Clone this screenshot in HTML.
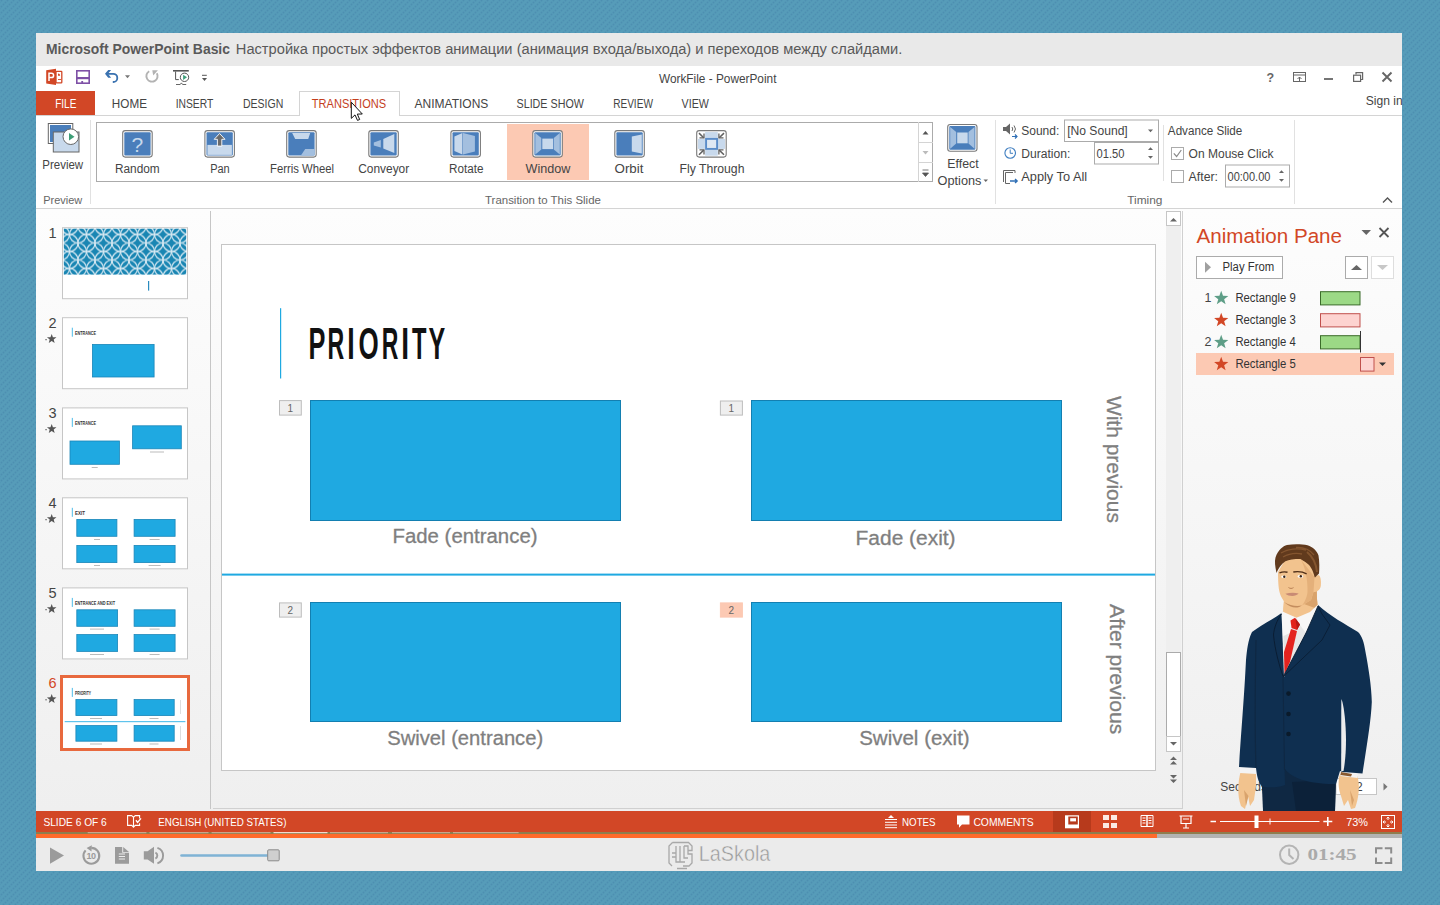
<!DOCTYPE html>
<html><head><meta charset="utf-8"><title>PowerPoint</title>
<style>
*{margin:0;padding:0;box-sizing:border-box;}
html,body{width:1440px;height:905px;overflow:hidden;}
body{background:#569cb9;}
#root{position:relative;width:1440px;height:905px;font-family:"Liberation Sans", sans-serif;}
.a{position:absolute;}
.t{position:absolute;white-space:nowrap;line-height:1;}

</style></head>
<body>
<div id="root">
<svg class="a" style="left:0;top:0" width="1440" height="905"><defs><pattern id="dots" x="0" y="0" width="6" height="6" patternUnits="userSpaceOnUse"><rect width="6" height="6" fill="#569cb9"/><circle cx="1.5" cy="0.5" r="0.95" fill="#4d8fb1"/><circle cx="5.5" cy="2.5" r="0.95" fill="#4d8fb1"/><circle cx="3.5" cy="4.5" r="0.95" fill="#4d8fb1"/><circle cx="1.5" cy="6.5" r="0.95" fill="#4d8fb1"/><circle cx="-0.5" cy="2.5" r="0.95" fill="#4d8fb1"/></pattern></defs><rect width="1440" height="905" fill="url(#dots)"/></svg>
<!-- window -->
<div class="a" style="left:36px;top:33px;width:1366px;height:838px;background:#fff;"></div>
<!-- course title bar -->
<div class="a" style="left:36px;top:33px;width:1366px;height:33px;background:#e9e9e9;"></div>
<!-- FILE tab -->
<div class="a" style="left:36px;top:91px;width:59px;height:25px;background:#d24726;"></div>
<!-- tab row bottom line -->
<div class="a" style="left:36px;top:115px;width:1366px;height:1px;background:#d4d4d4;"></div>
<!-- TRANSITIONS tab border -->
<div class="a" style="left:299px;top:91px;width:101px;height:25px;border:1px solid #d4d4d4;border-bottom:none;background:#fff;"></div>
<!-- ribbon bottom line -->
<div class="a" style="left:36px;top:208px;width:1366px;height:1px;background:#d4d4d4;"></div>
<!-- ribbon separators -->
<div class="a" style="left:90px;top:120px;width:1px;height:84px;background:#e1e1e1;"></div>
<div class="a" style="left:995px;top:120px;width:1px;height:84px;background:#e1e1e1;"></div>
<div class="a" style="left:1294px;top:120px;width:1px;height:84px;background:#e1e1e1;"></div>
<div class="a" style="left:1163px;top:125px;width:1px;height:56px;background:#e1e1e1;"></div>
<!-- gallery -->
<div class="a" style="left:96px;top:122px;width:837px;height:60px;border:1px solid #ababab;background:#fff;"></div>
<div class="a" style="left:507px;top:124px;width:82px;height:56px;background:#fcc9b3;"></div>
<!-- gallery scroll buttons -->
<div class="a" style="left:918px;top:122px;width:15px;height:60px;border-left:1px solid #d4d4d4;"></div>
<div class="a" style="left:918px;top:142px;width:15px;height:1px;background:#d4d4d4;"></div>
<div class="a" style="left:918px;top:162px;width:15px;height:1px;background:#d4d4d4;"></div>

<!-- main area panels -->
<div class="a" style="left:36px;top:209px;width:1366px;height:602px;background:linear-gradient(#fdfdfd,#efefef);"></div>
<div class="a" style="left:210px;top:211px;width:1px;height:598px;background:#c6c6c6;"></div>
<div class="a" style="left:213px;top:808px;width:970px;height:1px;background:#d0d0d0;"></div>
<div class="a" style="left:1182px;top:211px;width:1px;height:597px;background:#d0d0d0;"></div>
<!-- slide -->
<div class="a" style="left:221px;top:244px;width:935px;height:527px;background:#fff;border:1px solid #c6c6c6;"></div>
<!-- scrollbar -->
<div class="a" style="left:1166px;top:211px;width:15px;height:541px;background:#efefef;"></div>
<div class="a" style="left:1166px;top:211px;width:15px;height:15px;background:#fff;border:1px solid #c6c6c6;"></div>
<div class="a" style="left:1166px;top:652px;width:15px;height:85px;background:#fff;border:1px solid #ababab;"></div>
<div class="a" style="left:1166px;top:736px;width:15px;height:16px;background:#fff;border:1px solid #c6c6c6;"></div>

<!-- status bar -->
<div class="a" style="left:36px;top:811px;width:1366px;height:21px;background:#d24726;"></div>
<div class="a" style="left:36px;top:832px;width:1366px;height:1.5px;background:#8f7d4e;"></div>
<div class="a" style="left:36px;top:833.5px;width:1366px;height:4.5px;background:#b3b3b3;"></div>
<div class="a" style="left:36px;top:833.5px;width:1121px;height:4.5px;background:#ff6a2b;"></div>
<div class="a" style="left:1053px;top:811px;width:38px;height:21px;background:#b73a1c;"></div>
<!-- player bar -->
<div class="a" style="left:36px;top:838px;width:1366px;height:33px;background:#ebebeb;"></div>

<svg class="a" style="left:0;top:0" width="1440" height="905" viewBox="0 0 1440 905"><g><rect x="56" y="71.3" width="5.8" height="11.6" rx="0.6" fill="#fff" stroke="#d24726" stroke-width="1.3"/><path d="M58 79.5 h3 " stroke="#d24726" stroke-width="0.9"/><path d="M58 73.5 a2.2 2.2 0 0 1 2.2 2.2 h-2.2 z" fill="#d24726"/><path d="M46.2 70.2 L56 68.8 L56 85 L46.2 83.5 Z" fill="#d24726"/><path d="M49 81 V73.2 h2.4 a2.1 2.1 0 0 1 0 4.4 h-2.4" fill="none" stroke="#fff" stroke-width="1.5"/><rect x="76.8" y="70.8" width="12.4" height="12.4" fill="#fff" stroke="#7e50a6" stroke-width="1.6"/><rect x="77" y="77" width="12" height="2.2" fill="#7e50a6"/><rect x="81.3" y="81" width="1.8" height="2.5" fill="#7e50a6"/><path d="M106.5 73.8 H113.2 a4.1 4.1 0 0 1 0 8.2 H112.8" fill="none" stroke="#3a72b0" stroke-width="1.8"/><path d="M108.2 69.9 L111.1 69.9 L108 73.8 L111.1 77.7 L108.2 77.7 L105 73.8 Z" fill="#3a72b0"/><path d="M125 75.2 h5 l-2.5 3 z" fill="#777"/><path d="M149.2 71.2 A5.6 5.6 0 1 0 156.8 73.2" fill="none" stroke="#b3b3b3" stroke-width="1.9"/><path d="M152.3 70.2 H157.9 L153.2 75.6 Z" fill="#b3b3b3"/><rect x="173" y="70" width="15.8" height="1.6" fill="#555"/><path d="M175.6 71.5 V79.6 H178.8" fill="none" stroke="#555" stroke-width="1"/><circle cx="184.5" cy="77.3" r="4.2" fill="#fff" stroke="#555" stroke-width="1"/><path d="M183.1 74.8 L187 77.3 L183.1 79.9 Z" fill="#3e9e7a"/><path d="M176 84.5 h4.2 l1.2 -1.6 l1.2 1.6 h3.6" fill="none" stroke="#555" stroke-width="0.9"/><path d="M202 75.3 h4.8" stroke="#555" stroke-width="1"/><path d="M202 78 h5 l-2.5 3 z" fill="#555"/></g>
<g fill="none" stroke="#666"><rect x="1293.5" y="72.5" width="12" height="9" stroke-width="1"/><path d="M1293.5 75 h12" stroke-width="1"/><path d="M1299.5 81.5 V77 M1297.5 79 L1299.5 77 L1301.5 79" stroke-width="1"/><path d="M1324 79 h9" stroke-width="1.8"/><rect x="1353.6" y="75.2" width="7" height="6.2" stroke-width="1.2"/><path d="M1356 74.5 V72.6 H1362.6 V79.5 H1360.6" stroke-width="1.2"/><path d="M1382.5 72.5 L1391.5 81.5 M1391.5 72.5 L1382.5 81.5" stroke-width="1.9"/></g><text x="1266.5" y="81.6" font-family="Liberation Sans" font-weight="700" font-size="12.5" fill="#666">?</text>
<g><rect x="48.3" y="123.5" width="24.5" height="20" fill="#fff" stroke="#666" stroke-width="1"/><rect x="50" y="125" width="21" height="7" fill="#4a7ebb"/><rect x="50" y="125" width="3" height="17" fill="#4a7ebb"/><rect x="53.3" y="132" width="25.7" height="20" fill="#c8d9ec" stroke="#666" stroke-width="1"/><circle cx="70.8" cy="136.7" r="7.8" fill="#fff" stroke="#666" stroke-width="1"/><path d="M69 133 L74.5 136.7 L69 140.4 Z" fill="#3e9e76"/></g>
<g><rect x="122.7" y="130.6" width="29.5" height="26.5" rx="2.5" fill="#fff" stroke="#7a7a7a" stroke-width="1.1"/><rect x="124.3" y="132.2" width="26.3" height="23.3" rx="1" fill="#4a7ebb"/><rect x="204.9" y="130.6" width="29.5" height="26.5" rx="2.5" fill="#fff" stroke="#7a7a7a" stroke-width="1.1"/><rect x="206.5" y="132.2" width="26.3" height="23.3" rx="1" fill="#4a7ebb"/><rect x="286.7" y="130.6" width="29.5" height="26.5" rx="2.5" fill="#fff" stroke="#7a7a7a" stroke-width="1.1"/><rect x="288.3" y="132.2" width="26.3" height="23.3" rx="1" fill="#4a7ebb"/><rect x="368.8" y="130.6" width="29.5" height="26.5" rx="2.5" fill="#fff" stroke="#7a7a7a" stroke-width="1.1"/><rect x="370.40000000000003" y="132.2" width="26.3" height="23.3" rx="1" fill="#4a7ebb"/><rect x="450.9" y="130.6" width="29.5" height="26.5" rx="2.5" fill="#fff" stroke="#7a7a7a" stroke-width="1.1"/><rect x="452.5" y="132.2" width="26.3" height="23.3" rx="1" fill="#4a7ebb"/><rect x="532.8" y="130.6" width="29.5" height="26.5" rx="2.5" fill="#fff" stroke="#7a7a7a" stroke-width="1.1"/><rect x="534.4" y="132.2" width="26.3" height="23.3" rx="1" fill="#4a7ebb"/><rect x="614.8" y="130.6" width="29.5" height="26.5" rx="2.5" fill="#fff" stroke="#7a7a7a" stroke-width="1.1"/><rect x="616.4" y="132.2" width="26.3" height="23.3" rx="1" fill="#4a7ebb"/><text x="137.4" y="151.6" text-anchor="middle" font-family="Liberation Sans" font-weight="400" font-size="21" fill="#c8d9ec">?</text><rect x="207.4" y="144.9" width="24.5" height="10" fill="#c8d9ec"/><path d="M219.6 133.5 L225.0 139.29999999999998 L221.8 139.29999999999998 L221.8 146.1 L217.4 146.1 L217.4 139.29999999999998 L214.20000000000002 139.29999999999998 Z" fill="#6b6b6b" stroke="#fff" stroke-width="0.9"/><path d="M292.2 133.1 H310.2 L308.2 139.1 H295.2 Z" fill="#c8d9ec"/><path d="M301.2 155.1 L305.2 149.1 H314.7 V155.6 Z" fill="#a3bfdf"/><path d="M383.3 139.1 L394.3 134.1 V153.1 L383.3 148.6 Z" fill="#c8d9ec"/><path d="M373.8 142.6 L380.8 140.1 V147.6 L373.8 145.6 Z" fill="#a3bfdf"/><path d="M454.4 136.6 L462.4 133.1 V154.6 L454.4 151.1 Z" fill="#c8d9ec"/><path d="M463.0 133.1 L474.9 136.1 V151.6 L463.0 154.6 Z" fill="#a3bfdf"/><path d="M535.3 133.1 L541.3 138.1 V149.6 L535.3 154.6 Z" fill="#a3bfdf"/><path d="M559.8 133.1 L553.8 138.1 V149.6 L559.8 154.6 Z" fill="#a3bfdf"/><rect x="542.3" y="138.6" width="10.8" height="10.5" fill="#c8d9ec"/><path d="M631.8 136.6 L641.8 134.4 V153.6 L631.8 151.6 Z" fill="#c8d9ec"/><rect x="696.7" y="130.6" width="29.5" height="26.5" rx="2.5" fill="#fff" stroke="#7a7a7a" stroke-width="1.1"/><rect x="705.1" y="132.1" width="12.7" height="23.6" fill="#c8d9ec"/><rect x="698.0" y="138.9" width="27" height="10" fill="#c8d9ec"/><rect x="706.1" y="138.9" width="11" height="10" fill="#dfe8f3" stroke="#5b8cc8" stroke-width="1.9"/><path d="M699.0 133.1 L703.7 137.79999999999998 M724.0 133.1 L719.2 137.79999999999998 M699.0 154.79999999999998 L703.7 150.1 M724.0 154.79999999999998 L719.2 150.1" stroke="#616161" stroke-width="1.5"/><path d="M704.0 133.4 V137.9 H699.5 M718.9000000000001 133.4 V137.9 H723.5 M704.0 154.4 V149.9 H699.5 M718.9000000000001 154.4 V149.9 H723.5" fill="none" stroke="#616161" stroke-width="1.3"/></g>
<g><rect x="947.7" y="124.5" width="29.3" height="26.8" rx="2.5" fill="#fff" stroke="#7a7a7a" stroke-width="1.1"/><rect x="949.3000000000001" y="126.1" width="26.1" height="23.6" rx="1" fill="#4a7ebb"/><path d="M950.2 127 L956.2 132 V143.5 L950.2 148.8 Z" fill="#a3bfdf"/><path d="M974.5 127 L968.5 132 V143.5 L974.5 148.8 Z" fill="#a3bfdf"/><rect x="957.2" y="132.5" width="10.5" height="10.8" fill="#c8d9ec"/><path d="M983.5 179.5 h4.5 l-2.25 2.6 z" fill="#666"/></g>
<path d="M922.5 134.5 h6 l-3 -3.5 z" fill="#555"/><path d="M922.5 151 h6 l-3 3.5 z" fill="#bbb"/><path d="M922.5 170 h6 M922.5 173 h6 l-3 3.5 z" fill="#555" stroke="#555" stroke-width="0.8"/>
<g><path d="M1003 127 h3 l4 -3.5 v11 l-4 -3.5 h-3 z" fill="#666"/><path d="M1012 127 q1.5 2 0 4 M1014 125.5 q3 3.5 0 7" fill="none" stroke="#666" stroke-width="1"/><path d="M1012 136.5 h5 M1015 134.5 l2 2 l-2 2" fill="none" stroke="#2f6fb5" stroke-width="1.2"/><rect x="1064.5" y="120" width="94" height="21.5" fill="#fff" stroke="#ababab" stroke-width="1"/><path d="M1148 129.5 h5 l-2.5 2.8 z" fill="#666"/><circle cx="1010.2" cy="153" r="5.3" fill="none" stroke="#3f7ec0" stroke-width="1.1"/><path d="M1010.2 149.5 V153.3 H1013" fill="none" stroke="#3f7ec0" stroke-width="1"/><rect x="1094.5" y="142.5" width="64" height="21.5" fill="#fff" stroke="#ababab" stroke-width="1"/><path d="M1148 150 h5 l-2.5 -2.8 z M1148 156 h5 l-2.5 2.8 z" fill="#666"/><path d="M1003.5 182 V170.5 H1015 V173" fill="none" stroke="#666" stroke-width="1"/><path d="M1005.5 183.5 V172.5 H1013 M1005.5 183.5 H1010" fill="none" stroke="#666" stroke-width="1"/><path d="M1010 181 h7 M1015 179 l2.2 2 l-2.2 2" fill="none" stroke="#2f6fb5" stroke-width="1.3"/><rect x="1171.5" y="147.5" width="12" height="12" fill="#fff" stroke="#ababab" stroke-width="1"/><path d="M1173.8 153.3 L1176.6 156.5 L1181.3 150" fill="none" stroke="#8a8a8a" stroke-width="1.2"/><rect x="1171.5" y="170.5" width="12" height="12" fill="#fff" stroke="#ababab" stroke-width="1"/><rect x="1225.5" y="165" width="64" height="22" fill="#fff" stroke="#ababab" stroke-width="1"/><path d="M1279 173 h5 l-2.5 -2.8 z M1279 179 h5 l-2.5 2.8 z" fill="#666"/><path d="M1383 202.5 L1387.5 198 L1392 202.5" fill="none" stroke="#555" stroke-width="1.4"/></g>
<g><defs><pattern id="rings" x="61" y="217.5" width="17" height="17" patternUnits="userSpaceOnUse"><rect width="17" height="17" fill="#1a86b3"/><g fill="none" stroke="#d5e8f2" stroke-width="1.2"><circle cx="0" cy="0" r="8.5"/><circle cx="17" cy="0" r="8.5"/><circle cx="0" cy="17" r="8.5"/><circle cx="17" cy="17" r="8.5"/><circle cx="8.5" cy="8.5" r="8.5"/><circle cx="8.5" cy="-8.5" r="8.5"/><circle cx="8.5" cy="25.5" r="8.5"/><circle cx="-8.5" cy="8.5" r="8.5"/><circle cx="25.5" cy="8.5" r="8.5"/></g></pattern></defs><rect x="62.5" y="227.7" width="125" height="71" fill="#fff" stroke="#c6c6c6" stroke-width="1"/><rect x="62.5" y="317.7" width="125" height="71" fill="#fff" stroke="#c6c6c6" stroke-width="1"/><rect x="62.5" y="407.9" width="125" height="71" fill="#fff" stroke="#c6c6c6" stroke-width="1"/><rect x="62.5" y="497.8" width="125" height="71" fill="#fff" stroke="#c6c6c6" stroke-width="1"/><rect x="62.5" y="587.9" width="125" height="71" fill="#fff" stroke="#c6c6c6" stroke-width="1"/><rect x="62.5" y="677.9" width="125" height="71" fill="#fff" stroke="#c6c6c6" stroke-width="1"/><rect x="63.8" y="228.7" width="122.4" height="45.9" fill="url(#rings)"/><rect x="148" y="281" width="1.2" height="9.6" fill="#2a8bbf"/><rect x="71.8" y="327.7" width="1.1" height="9" fill="#5fc3ec"/><text x="75.0" y="334.5" font-family="Liberation Sans" font-size="5.6" font-weight="700" fill="#333" textLength="21.0" lengthAdjust="spacingAndGlyphs">ENTRANCE</text><rect x="92.4" y="344.4" width="61.7" height="32.59999999999998" fill="#1fa9e1" stroke="#1b86b8" stroke-width="0.8"/><rect x="71.8" y="417.9" width="1.1" height="9" fill="#5fc3ec"/><text x="75.0" y="424.7" font-family="Liberation Sans" font-size="5.6" font-weight="700" fill="#333" textLength="21.0" lengthAdjust="spacingAndGlyphs">ENTRANCE</text><rect x="70.0" y="441.0" width="49.400000000000006" height="23.299999999999965" fill="#1fa9e1" stroke="#1b86b8" stroke-width="0.8"/><rect x="132.6" y="425.79999999999995" width="48.7" height="23.00000000000001" fill="#1fa9e1" stroke="#1b86b8" stroke-width="0.8"/><rect x="91.7" y="467.0" width="6" height="1" fill="#bbb"/><rect x="150.0" y="451.5" width="14" height="1" fill="#bbb"/><rect x="71.8" y="507.8" width="1.1" height="9" fill="#5fc3ec"/><text x="75.0" y="514.6" font-family="Liberation Sans" font-size="5.6" font-weight="700" fill="#333" textLength="10.0" lengthAdjust="spacingAndGlyphs">EXIT</text><rect x="76.80000000000001" y="519.4" width="40.099999999999994" height="16.900000000000045" fill="#1fa9e1" stroke="#1b86b8" stroke-width="0.8"/><rect x="134.1" y="519.4" width="41.000000000000014" height="16.900000000000045" fill="#1fa9e1" stroke="#1b86b8" stroke-width="0.8"/><rect x="76.80000000000001" y="545.4" width="40.099999999999994" height="17.2" fill="#1fa9e1" stroke="#1b86b8" stroke-width="0.8"/><rect x="134.1" y="545.4" width="41.000000000000014" height="17.2" fill="#1fa9e1" stroke="#1b86b8" stroke-width="0.8"/><rect x="94.0" y="539.0" width="6" height="1" fill="#bbb"/><rect x="149.6" y="539.0" width="10" height="1" fill="#bbb"/><rect x="94.0" y="565.0" width="6" height="1" fill="#bbb"/><rect x="148.6" y="565.0" width="12" height="1" fill="#bbb"/><rect x="71.8" y="597.9" width="1.1" height="9" fill="#5fc3ec"/><text x="75.0" y="604.7" font-family="Liberation Sans" font-size="5.6" font-weight="700" fill="#333" textLength="40.0" lengthAdjust="spacingAndGlyphs">ENTRANCE AND EXIT</text><rect x="76.80000000000001" y="609.8" width="40.8" height="16.500000000000068" fill="#1fa9e1" stroke="#1b86b8" stroke-width="0.8"/><rect x="134.1" y="609.8" width="41.000000000000014" height="16.500000000000068" fill="#1fa9e1" stroke="#1b86b8" stroke-width="0.8"/><rect x="76.80000000000001" y="634.6" width="40.8" height="16.79999999999991" fill="#1fa9e1" stroke="#1b86b8" stroke-width="0.8"/><rect x="134.1" y="634.6" width="41.000000000000014" height="16.79999999999991" fill="#1fa9e1" stroke="#1b86b8" stroke-width="0.8"/><rect x="90.0" y="628.6" width="14" height="1" fill="#bbb"/><rect x="149.6" y="628.6" width="10" height="1" fill="#bbb"/><rect x="90.0" y="654.0" width="14" height="1" fill="#bbb"/><rect x="149.6" y="654.0" width="10" height="1" fill="#bbb"/><rect x="61.5" y="676.5" width="127" height="73" fill="#fff" stroke="#e8693e" stroke-width="3"/><rect x="71.8" y="687.9" width="1.1" height="9" fill="#5fc3ec"/><text x="75.0" y="694.7" font-family="Liberation Sans" font-size="5.6" font-weight="700" fill="#333" textLength="16.0" lengthAdjust="spacingAndGlyphs">PRIORITY</text><rect x="75.9" y="699.6" width="41.0" height="15.999999999999954" fill="#1fa9e1" stroke="#1b86b8" stroke-width="0.8"/><rect x="134.1" y="699.6" width="40.10000000000001" height="15.999999999999954" fill="#1fa9e1" stroke="#1b86b8" stroke-width="0.8"/><rect x="75.9" y="725.6" width="41.0" height="15.599999999999977" fill="#1fa9e1" stroke="#1b86b8" stroke-width="0.8"/><rect x="134.1" y="725.6" width="40.10000000000001" height="15.599999999999977" fill="#1fa9e1" stroke="#1b86b8" stroke-width="0.8"/><rect x="64.7" y="721" width="120.7" height="1.2" fill="#5fc3ec"/><rect x="90.0" y="718.0" width="12" height="1" fill="#bbb"/><rect x="149.5" y="718.0" width="9" height="1" fill="#bbb"/><rect x="90.0" y="743.5" width="12" height="1" fill="#bbb"/><rect x="149.5" y="743.5" width="9" height="1" fill="#bbb"/><rect x="180" y="700" width="1" height="14" fill="#ddd"/><rect x="180" y="726" width="1" height="14" fill="#ddd"/><text x="48.5" y="237.8" font-family="Liberation Sans" font-size="14.5" font-weight="400" fill="#444">1</text><text x="48.5" y="327.9" font-family="Liberation Sans" font-size="14.5" font-weight="400" fill="#444">2</text><polygon points="51.70,333.90 52.93,337.20 56.46,337.35 53.70,339.55 54.64,342.95 51.70,341.00 48.76,342.95 49.70,339.55 46.94,337.35 50.47,337.20" fill="#555"/><rect x="45.3" y="339.2" width="1.5" height="1" fill="#555"/><text x="48.5" y="417.9" font-family="Liberation Sans" font-size="14.5" font-weight="400" fill="#444">3</text><polygon points="51.70,423.90 52.93,427.20 56.46,427.35 53.70,429.55 54.64,432.95 51.70,431.00 48.76,432.95 49.70,429.55 46.94,427.35 50.47,427.20" fill="#555"/><rect x="45.3" y="429.2" width="1.5" height="1" fill="#555"/><text x="48.5" y="507.9" font-family="Liberation Sans" font-size="14.5" font-weight="400" fill="#444">4</text><polygon points="51.70,513.90 52.93,517.20 56.46,517.35 53.70,519.55 54.64,522.95 51.70,521.00 48.76,522.95 49.70,519.55 46.94,517.35 50.47,517.20" fill="#555"/><rect x="45.3" y="519.2" width="1.5" height="1" fill="#555"/><text x="48.5" y="597.9" font-family="Liberation Sans" font-size="14.5" font-weight="400" fill="#444">5</text><polygon points="51.70,603.90 52.93,607.20 56.46,607.35 53.70,609.55 54.64,612.95 51.70,611.00 48.76,612.95 49.70,609.55 46.94,607.35 50.47,607.20" fill="#555"/><rect x="45.3" y="609.2" width="1.5" height="1" fill="#555"/><text x="48.5" y="688.0" font-family="Liberation Sans" font-size="14.5" font-weight="400" fill="#d24726">6</text><polygon points="51.70,694.00 52.93,697.30 56.46,697.45 53.70,699.65 54.64,703.05 51.70,701.10 48.76,703.05 49.70,699.65 46.94,697.45 50.47,697.30" fill="#555"/><rect x="45.3" y="699.3" width="1.5" height="1" fill="#555"/><rect x="280" y="308.2" width="1.2" height="70.3" fill="#1fa9e1"/><text x="308.5" y="359.0" font-family="Liberation Sans" font-size="44.5" font-weight="700" fill="#111" textLength="16.9" lengthAdjust="spacingAndGlyphs">P</text><text x="327.6" y="359.0" font-family="Liberation Sans" font-size="44.5" font-weight="700" fill="#111" textLength="16.7" lengthAdjust="spacingAndGlyphs">R</text><text x="347.2" y="359.0" font-family="Liberation Sans" font-size="44.5" font-weight="700" fill="#111" textLength="7.4" lengthAdjust="spacingAndGlyphs">I</text><text x="358.5" y="359.0" font-family="Liberation Sans" font-size="44.5" font-weight="700" fill="#111" textLength="20.2" lengthAdjust="spacingAndGlyphs">O</text><text x="381.8" y="359.0" font-family="Liberation Sans" font-size="44.5" font-weight="700" fill="#111" textLength="16.6" lengthAdjust="spacingAndGlyphs">R</text><text x="401.3" y="359.0" font-family="Liberation Sans" font-size="44.5" font-weight="700" fill="#111" textLength="7.8" lengthAdjust="spacingAndGlyphs">I</text><text x="411.9" y="359.0" font-family="Liberation Sans" font-size="44.5" font-weight="700" fill="#111" textLength="14.5" lengthAdjust="spacingAndGlyphs">T</text><text x="428.6" y="359.0" font-family="Liberation Sans" font-size="44.5" font-weight="700" fill="#111" textLength="16.7" lengthAdjust="spacingAndGlyphs">Y</text><rect x="279.5" y="400.6" width="21.80000000000001" height="14.5" fill="#efefef" stroke="#bdbdbd" stroke-width="1"/><text x="290.4" y="412.0" font-family="Liberation Sans" font-size="10" font-weight="400" fill="#666" text-anchor="middle">1</text><rect x="720.4" y="401.0" width="22.0" height="14.100000000000023" fill="#efefef" stroke="#bdbdbd" stroke-width="1"/><text x="731.4" y="412.0" font-family="Liberation Sans" font-size="10" font-weight="400" fill="#666" text-anchor="middle">1</text><rect x="279.5" y="602.9" width="21.80000000000001" height="14.200000000000045" fill="#efefef" stroke="#bdbdbd" stroke-width="1"/><text x="290.4" y="614.0" font-family="Liberation Sans" font-size="10" font-weight="400" fill="#666" text-anchor="middle">2</text><rect x="720.4" y="602.9" width="22.0" height="14.200000000000045" fill="#fcc9b3" stroke="#fcc9b3" stroke-width="1"/><text x="731.4" y="614.0" font-family="Liberation Sans" font-size="10" font-weight="400" fill="#666" text-anchor="middle">2</text><rect x="310.5" y="400.5" width="310" height="120" fill="#1fa9e1" stroke="#137fb1" stroke-width="1"/><rect x="751.5" y="400.5" width="310" height="120" fill="#1fa9e1" stroke="#137fb1" stroke-width="1"/><rect x="310.5" y="602.5" width="310" height="119" fill="#1fa9e1" stroke="#137fb1" stroke-width="1"/><rect x="751.5" y="602.5" width="310" height="119" fill="#1fa9e1" stroke="#137fb1" stroke-width="1"/><rect x="222" y="573.6" width="933" height="2" fill="#1fa9e1"/><text x="392.5" y="543.1" font-family="Liberation Sans" font-size="20" font-weight="400" fill="#7f7f7f" textLength="145.0" lengthAdjust="spacingAndGlyphs" stroke="#7f7f7f" stroke-width="0.3">Fade (entrance)</text><text x="855.6" y="545.3" font-family="Liberation Sans" font-size="20" font-weight="400" fill="#7f7f7f" textLength="100.0" lengthAdjust="spacingAndGlyphs" stroke="#7f7f7f" stroke-width="0.3">Fade (exit)</text><text x="387.2" y="745.0" font-family="Liberation Sans" font-size="20" font-weight="400" fill="#7f7f7f" textLength="156.0" lengthAdjust="spacingAndGlyphs" stroke="#7f7f7f" stroke-width="0.3">Swivel (entrance)</text><text x="859.2" y="745.0" font-family="Liberation Sans" font-size="20" font-weight="400" fill="#7f7f7f" textLength="110.5" lengthAdjust="spacingAndGlyphs" stroke="#7f7f7f" stroke-width="0.3">Swivel (exit)</text><g transform="translate(1107.3 395.9) rotate(90)"><text x="0.0" y="0.0" font-family="Liberation Sans" font-size="21" font-weight="400" fill="#7f7f7f" textLength="127.0" lengthAdjust="spacingAndGlyphs" stroke="#7f7f7f" stroke-width="0.3">With previous</text></g><g transform="translate(1109.6 604.1) rotate(90)"><text x="0.0" y="0.0" font-family="Liberation Sans" font-size="21" font-weight="400" fill="#7f7f7f" textLength="130.2" lengthAdjust="spacingAndGlyphs" stroke="#7f7f7f" stroke-width="0.3">After previous</text></g><path d="M1170 221.5 h7 l-3.5 -3.5 z" fill="#666"/><path d="M1170 742 h7 l-3.5 3.5 z" fill="#666"/><path d="M1170 760 h7 l-3.5 -3.5 z M1170 764.5 h7 l-3.5 -3.5 z" fill="#666"/><path d="M1170 775 h7 l-3.5 3.5 z M1170 779.5 h7 l-3.5 3.5 z" fill="#666"/></g>
<g><text x="1196.6" y="243.4" font-family="Liberation Sans" font-size="20.5" font-weight="400" fill="#d24726" textLength="145.4" lengthAdjust="spacingAndGlyphs">Animation Pane</text><path d="M1361.5 230 h9.5 l-4.75 5 z" fill="#666"/><path d="M1379.5 228 L1388.5 237 M1388.5 228 L1379.5 237" stroke="#555" stroke-width="1.8"/><rect x="1196.5" y="256.5" width="86" height="22" fill="#fff" stroke="#ababab" stroke-width="1"/><path d="M1205 261.8 L1211 267.3 L1205 272.8 Z" fill="#a0a0a0"/><text x="1222.5" y="270.7" font-family="Liberation Sans" font-size="12.5" font-weight="400" fill="#333" textLength="51.7" lengthAdjust="spacingAndGlyphs">Play From</text><rect x="1345.5" y="256.5" width="22" height="22" fill="#fff" stroke="#ababab" stroke-width="1"/><path d="M1351 270 h11 l-5.5 -5 z" fill="#666"/><rect x="1371.5" y="256.5" width="22" height="22" fill="#fff" stroke="#dedede" stroke-width="1"/><path d="M1377 265 h11 l-5.5 5 z" fill="#c8c8c8"/><rect x="1196" y="353" width="198" height="22" fill="#fcc9b3"/><text x="1204.5" y="302.4" font-family="Liberation Sans" font-size="12.5" font-weight="400" fill="#444">1</text><polygon points="1221.20,290.70 1223.02,295.69 1228.33,295.88 1224.15,299.16 1225.61,304.27 1221.20,301.30 1216.79,304.27 1218.25,299.16 1214.07,295.88 1219.38,295.69" fill="#5e9e87"/><text x="1235.4" y="302.4" font-family="Liberation Sans" font-size="12.5" font-weight="400" fill="#333" textLength="60.4" lengthAdjust="spacingAndGlyphs">Rectangle 9</text><rect x="1320.5" y="291.7" width="39.5" height="13.2" fill="#9cd986" stroke="#3b6b2a" stroke-width="1"/><polygon points="1221.20,312.70 1223.02,317.69 1228.33,317.88 1224.15,321.16 1225.61,326.27 1221.20,323.30 1216.79,326.27 1218.25,321.16 1214.07,317.88 1219.38,317.69" fill="#d24726"/><text x="1235.4" y="324.4" font-family="Liberation Sans" font-size="12.5" font-weight="400" fill="#333" textLength="60.4" lengthAdjust="spacingAndGlyphs">Rectangle 3</text><rect x="1320.5" y="313.7" width="39.5" height="13.2" fill="#fdd3d0" stroke="#c0504d" stroke-width="1"/><text x="1204.5" y="346.4" font-family="Liberation Sans" font-size="12.5" font-weight="400" fill="#444">2</text><polygon points="1221.20,334.70 1223.02,339.69 1228.33,339.88 1224.15,343.16 1225.61,348.27 1221.20,345.30 1216.79,348.27 1218.25,343.16 1214.07,339.88 1219.38,339.69" fill="#5e9e87"/><text x="1235.4" y="346.4" font-family="Liberation Sans" font-size="12.5" font-weight="400" fill="#333" textLength="60.4" lengthAdjust="spacingAndGlyphs">Rectangle 4</text><rect x="1320.5" y="335.7" width="39.5" height="13.2" fill="#9cd986" stroke="#3b6b2a" stroke-width="1"/><polygon points="1221.20,356.70 1223.02,361.69 1228.33,361.88 1224.15,365.16 1225.61,370.27 1221.20,367.30 1216.79,370.27 1218.25,365.16 1214.07,361.88 1219.38,361.69" fill="#d24726"/><text x="1235.4" y="368.4" font-family="Liberation Sans" font-size="12.5" font-weight="400" fill="#333" textLength="60.4" lengthAdjust="spacingAndGlyphs">Rectangle 5</text><rect x="1360.5" y="357.5" width="13.5" height="13.6" fill="#fdd3d0" stroke="#c0504d" stroke-width="1"/><path d="M1379 362.4 h7 l-3.5 3.5 z" fill="#333"/><rect x="1360" y="331" width="1" height="21.5" fill="#333"/></g>
<g><rect x="87.7" y="832" width="58.7" height="1.2" fill="#c9a58a"/><rect x="149.5" y="832" width="59.0" height="1.2" fill="#c9a58a"/><rect x="211.6" y="832" width="58.900000000000006" height="1.2" fill="#c9a58a"/><rect x="273.5" y="832" width="54.0" height="1.2" fill="#f5d9cc"/><rect x="330" y="832" width="58" height="1.2" fill="#c9a58a"/><rect x="392" y="832" width="58" height="1.2" fill="#c9a58a"/><rect x="453" y="832" width="65.60000000000002" height="1.2" fill="#c9a58a"/><text x="43.4" y="826.0" font-family="Liberation Sans" font-size="11.5" font-weight="400" fill="#ffffff" textLength="63.4" lengthAdjust="spacingAndGlyphs">SLIDE 6 OF 6</text><path d="M131.8 815.6 H127.6 V825.4 H131.8 L133.5 827.3 L135.2 825.4 H139.6 V823.2 M139.6 818.6 V815.6 H135.2 L133.5 817.3 L131.8 815.6 M133.5 817.3 V827" fill="none" stroke="#fff" stroke-width="1.1"/><path d="M135.9 820.3 L137.6 822.4 L141 818.4" fill="none" stroke="#fff" stroke-width="1.4"/><text x="158.3" y="826.0" font-family="Liberation Sans" font-size="11.5" font-weight="400" fill="#ffffff" textLength="128.1" lengthAdjust="spacingAndGlyphs">ENGLISH (UNITED STATES)</text><path d="M885 819.5 h12 M885 822.3 h12 M885 825 h12 M885 827.7 h12" stroke="#fff" stroke-width="1"/><path d="M888 818 l3 -3 l3 3 z" fill="#fff"/><text x="902.0" y="826.0" font-family="Liberation Sans" font-size="11.5" font-weight="400" fill="#ffffff" textLength="33.6" lengthAdjust="spacingAndGlyphs">NOTES</text><path d="M957 815.5 h12.5 v9 h-7.5 l-3 3.3 v-3.3 h-2 z" fill="#fff"/><text x="973.4" y="826.0" font-family="Liberation Sans" font-size="11.5" font-weight="400" fill="#ffffff" textLength="60.4" lengthAdjust="spacingAndGlyphs">COMMENTS</text><rect x="1065" y="815.3" width="14" height="13" fill="#fff"/><rect x="1068.3" y="816.5" width="9.5" height="8" fill="#b73a1c"/><rect x="1070.2" y="818.2" width="5.8" height="3.2" fill="#fff"/><rect x="1103" y="815" width="6" height="5" fill="#fbeae4"/><rect x="1111" y="815" width="6" height="5" fill="#fbeae4"/><rect x="1103" y="823" width="6" height="5" fill="#fbeae4"/><rect x="1111" y="823" width="6" height="5" fill="#fbeae4"/><path d="M1141 815.5 h6 v11 h-6 z M1147 815.5 h6 v11 h-6 z M1142.5 818 h3 M1142.5 820.5 h3 M1142.5 823 h3 M1148.5 818 h3 M1148.5 820.5 h3 M1148.5 823 h3" fill="none" stroke="#fff" stroke-width="1"/><path d="M1179.5 816 h13 M1181 816 v7.5 h10 v-7.5 M1183 819 h6 M1186 823.5 v4 M1183 828 h6" fill="none" stroke="#fff" stroke-width="1.2"/><path d="M1210.5 821.5 h5.5" stroke="#fff" stroke-width="1.5"/><rect x="1220" y="821" width="99.5" height="1" fill="#fff"/><rect x="1254.5" y="815.5" width="4" height="12.5" fill="#fff"/><rect x="1269.5" y="818.5" width="1" height="6" fill="#fff"/><path d="M1323.3 821.5 h9 M1327.8 817 v9" stroke="#fff" stroke-width="1.6"/><text x="1346.2" y="826.0" font-family="Liberation Sans" font-size="11.5" font-weight="400" fill="#ffffff" textLength="21.8" lengthAdjust="spacingAndGlyphs">73%</text><rect x="1381.5" y="815.5" width="13" height="13" fill="none" stroke="#fff" stroke-width="1"/><path d="M1388 817 v3 M1388 824 v3 M1383 822 h3 M1390 822 h3" stroke="#fff" stroke-width="1"/><path d="M1386.5 818.5 l1.5 -1.5 l1.5 1.5 M1386.5 825.5 l1.5 1.5 l1.5 -1.5 M1384.5 820.5 l-1.5 1.5 l1.5 1.5 M1391.5 820.5 l1.5 1.5 l-1.5 1.5" fill="none" stroke="#fff" stroke-width="0.9"/><path d="M50 847.5 L64 855.5 L50 863.7 Z" fill="#9b9b9b"/><path d="M91.3 847.9 A7.9 7.9 0 1 1 85.6 850.4" fill="none" stroke="#9b9b9b" stroke-width="2.1"/><path d="M91.8 845.2 L86.6 848 L91.5 851.6 Z" fill="#9b9b9b"/><text x="90.9" y="859.2" font-family="Liberation Sans" font-size="9" font-weight="700" fill="#9b9b9b" text-anchor="middle" letter-spacing="-0.6">10</text><path d="M115 847 h7.2 v5.8 h6.8 v11 h-14 z" fill="#9b9b9b"/><path d="M123.2 847 L129 852 H123.2 Z" fill="#9b9b9b"/><path d="M118.8 854 h6.2 M118.8 856.5 h6.2 M118.8 859 h6.2" stroke="#ebebeb" stroke-width="1"/><path d="M143.8 851.2 h3.8 l6.4 -4.4 v17 l-6.4 -4.4 h-3.8 z" fill="#9b9b9b"/><path d="M155.4 852.6 a3.3 3.3 0 0 1 0 6 M157.4 847.8 a8.2 8.2 0 0 1 0 15.6" fill="none" stroke="#9b9b9b" stroke-width="1.9"/><rect x="180.2" y="854.2" width="90" height="2.6" rx="1.3" fill="#7fb3d5"/><rect x="267.7" y="849.8" width="11.5" height="11" rx="1" fill="#cfcfcf" stroke="#8a8a8a" stroke-width="1"/><g fill="none" stroke="#a8a8a8" stroke-width="1.3"><path d="M672.5 842.5 h16 l3.5 3.5 v4.5 h-4 M672.5 842.5 l-3.5 3.5 v17 l3 3"/><path d="M676 846 v7 h-4 M676 853 v9 h9 M680 846 v16 M684 846 h4 v8 h4 v9 l-3 3 h-6 M684 846 v12 h4 M672 857 h4"/><path d="M677 868.5 h10" stroke-width="1.5"/></g><text x="698.8" y="860.7" font-family="Liberation Sans" font-size="21.5" font-weight="400" fill="#999999" textLength="71.5" lengthAdjust="spacingAndGlyphs" stroke="#ebebeb" stroke-width="0.45">LaSkola</text><circle cx="1289.2" cy="854.8" r="9.2" fill="none" stroke="#b4b4b4" stroke-width="2"/><path d="M1289.2 848.5 V855 L1293.5 859" fill="none" stroke="#b4b4b4" stroke-width="2"/><text x="1307.4" y="860.2" font-family="Liberation Serif" font-size="17.5" font-weight="700" fill="#aaaaaa" textLength="49.2" lengthAdjust="spacingAndGlyphs">01:45</text><path d="M1376 853.5 v-5.3 h6.5 M1384.8 848.2 h6.4 v5.3 M1391.2 857.5 v5.4 h-6.4 M1382.5 862.9 h-6.5 v-5.4" fill="none" stroke="#8d8d8d" stroke-width="2"/></g>
<g><text x="1220.3" y="791.0" font-family="Liberation Sans" font-size="12.5" font-weight="400" fill="#444" textLength="50.0" lengthAdjust="spacingAndGlyphs">Seconds:</text><rect x="1336" y="778.5" width="40.5" height="16" fill="#fff" stroke="#c6c6c6" stroke-width="1"/><text x="1356.0" y="791.0" font-family="Liberation Sans" font-size="12" font-weight="400" fill="#444">2</text><path d="M1383.5 783 L1387.5 786.8 L1383.5 790.6 Z" fill="#777"/><path d="M1261 766 L1336 766 L1335 811 L1263 811 Z" fill="#0f2843"/><path d="M1292 782 L1296 811 L1335 811 L1336 780 Z" fill="#0c2139"/><path d="M1240.5 772 C1238 782 1237 795 1241 806 L1245 809 L1248 796 L1250 806 L1254 800 L1256 786 L1256 772 Z" fill="#f2c38e"/><path d="M1244 790 L1246 806 L1248.5 796 Z" fill="#d9a36c"/><path d="M1340 774 L1357.5 776 C1360 786 1359 798 1355 808 L1351 809 L1348 800 L1344 806 L1341 796 C1338 788 1338 780 1340 774 Z" fill="#f2c38e"/><path d="M1350 790 L1352 806 L1354 800 Z" fill="#d9a36c"/><path d="M1240 767 L1256 768 L1256 774 L1240 773 Z" fill="#f4f4f4"/><path d="M1341 771 L1358 773 L1357.5 778 L1340.5 776 Z" fill="#f4f4f4"/><path d="M1341 772 L1352 774 L1351 776.5 L1340.5 775 Z" fill="#8a5a30"/><path d="M1284 600 L1313 590 L1316 588 L1318 612 L1296.5 618 L1283 613 Z" fill="#f2c38e"/><path d="M1304 604 L1313.5 588 L1316.5 588 L1317.5 609 Z" fill="#d9a36c"/><path d="M1283 612 C1272 620 1260 626 1252 632 C1248 640 1247 650 1246 660 C1244 700 1242 720 1239 767 L1256 768 C1257 776 1258 782 1262 786.5 C1270 788 1279 787.5 1285 785 L1284.5 768 C1290 778 1310 784.5 1336 784 L1340 771 L1343 772 L1362.5 773.5 C1366 750 1371 722 1371.8 702 C1371.5 686 1368.5 668 1365.5 652 C1364 642 1362 636 1358 632 C1345 624 1330 616 1318 605 Z" fill="#0f2f50"/><path d="M1256 640 C1255 690 1255 740 1256 768" fill="none" stroke="#0f2843" stroke-width="1.2"/><path d="M1341.3 699 C1343.5 703 1345.8 720 1346 740 C1346 752 1345 763 1343.5 771 L1341.2 771 Z" fill="#ececec"/><path d="M1282 611 L1317.7 605 L1306 633 L1284 677 L1283 653 Z" fill="#e8e8e8"/><path d="M1284 600 L1313 590 L1316 588 L1318 612 L1296.5 618 L1283 613 Z" fill="#f2c38e"/><path d="M1304 604 L1313.5 588 L1316.5 588 L1317.5 609 Z" fill="#d9a36c"/><path d="M1281.3 611 L1296.5 617.8 L1290 633 L1283.5 653 Z" fill="#f7f7f7"/><path d="M1317.7 604.8 L1318.8 612 L1306 633 L1299.5 624.5 L1296.5 617.8 L1310 612 Z" fill="#f7f7f7"/><path d="M1283.5 636 L1290 633 L1284 652 Z" fill="#e3e3e3"/><path d="M1290.5 620.5 L1295 617.8 L1300 624.5 L1297 630 L1291.5 628 Z" fill="#e2231a"/><path d="M1295.5 618.5 L1300 624.5 L1297 630 Z" fill="#b51a14"/><path d="M1291 629 L1297 631 L1290 662 L1284.5 674 L1284 652 Z" fill="#e4231f"/><path d="M1281.5 614 C1277 620 1274 628 1273.5 635 C1275 650 1279 665 1283 676" fill="none" stroke="#0a1d33" stroke-width="1"/><path d="M1318 606 L1306 633 L1283 677 L1322 640 L1330 625 L1322 614 Z" fill="#0f2f50" stroke="#0a1d33" stroke-width="0.9"/><path d="M1283 677 L1284.5 770" stroke="#0f2843" stroke-width="1.1"/><circle cx="1288.5" cy="693.6" r="2.3" fill="#0a1a2a"/><circle cx="1288.5" cy="714" r="2.3" fill="#0a1a2a"/><circle cx="1288.5" cy="734" r="2.3" fill="#0a1a2a"/><path d="M1278 572 C1278 580 1278.5 588 1279.5 592 C1281 598 1285 604 1291.5 607.3 C1296 607.5 1300 606.5 1302 605.5 C1306 603 1309 601 1311 600 L1313.5 592 C1317 592 1320 590 1320.8 586 C1321.5 581 1320.5 575.5 1318.5 575 L1316 576 L1314 565 L1300 558 L1285 560 Z" fill="#f2c38e"/><path d="M1300.4 559 C1305 566 1308 580 1307.5 592 C1307 598 1304 603 1302 605.5 C1306 603 1309 601 1311 600 L1313.5 592 L1314.5 577 Z" fill="#e4b07a"/><path d="M1284 602 C1290 606 1297 606.5 1302 605.5 C1298 608.5 1291 608.8 1284 602 Z" fill="#c48d5e"/><path d="M1276.5 573 C1275 566 1274.5 561 1275.5 557.5 C1278 550 1283 546 1287 545 C1294 544 1302 544.2 1307.5 545.3 C1313 547 1317 551 1318.5 555.5 C1319.5 562 1319.5 568 1319 573.6 L1315 577.5 L1314.6 577 C1313 570 1310 565 1306.6 563 C1302 559.5 1300 559 1300.4 559 C1294 559 1289 559.5 1285.4 561.2 C1281 564 1278 569 1276.5 573 Z" fill="#613a1d"/><path d="M1281 553 C1288 549 1298 548 1306 550 M1296 547.5 C1303 547 1310 550 1314 555 M1283 557 C1290 553 1297 553 1302 554" fill="none" stroke="#84552f" stroke-width="1.3"/><path d="M1307 552 C1312 556 1316 563 1317 572" fill="none" stroke="#84552f" stroke-width="2"/><path d="M1279.5 572.9 C1282 571.8 1285 571.6 1287.5 572.2 M1293.3 572 C1298 571.3 1303 571.8 1306.6 573.8" fill="none" stroke="#4e2e18" stroke-width="1.4"/><ellipse cx="1283.8" cy="576.8" rx="2.6" ry="1.3" fill="#fff"/><ellipse cx="1300.4" cy="576.4" rx="2.9" ry="1.3" fill="#fff"/><circle cx="1284.3" cy="576.7" r="1.2" fill="#3a2618"/><circle cx="1300.8" cy="576.3" r="1.2" fill="#3a2618"/><path d="M1288.5 587.5 C1290 588.7 1292 588.7 1293.5 587.6" fill="none" stroke="#b98155" stroke-width="1"/><path d="M1285.4 593.8 C1290 592.6 1295 592.6 1298.6 593.6 C1296 596.8 1289 596.8 1285.4 593.8 Z" fill="#c98b74"/></g></svg>
<svg class="a" style="left:0;top:0" width="1440" height="905">
<text x="46.01" y="54.00" font-family="Liberation Sans" font-size="14" font-weight="700" fill="#595959" textLength="183.98" lengthAdjust="spacingAndGlyphs">Microsoft PowerPoint Basic</text>
<text x="235.81" y="54.00" font-family="Liberation Sans" font-size="14" font-weight="400" fill="#595959" textLength="666.48" lengthAdjust="spacingAndGlyphs">Настройка простых эффектов анимации (анимация входа/выхода) и переходов между слайдами.</text>
<text x="658.96" y="82.80" font-family="Liberation Sans" font-size="12.5" font-weight="400" fill="#444444" textLength="117.47" lengthAdjust="spacingAndGlyphs">WorkFile - PowerPoint</text>
<text x="55.15" y="107.80" font-family="Liberation Sans" font-size="13" font-weight="400" fill="#fff" textLength="21.21" lengthAdjust="spacingAndGlyphs">FILE</text>
<text x="111.84" y="108.20" font-family="Liberation Sans" font-size="13" font-weight="400" fill="#444444" textLength="35.11" lengthAdjust="spacingAndGlyphs">HOME</text>
<text x="175.64" y="108.20" font-family="Liberation Sans" font-size="13" font-weight="400" fill="#444444" textLength="37.61" lengthAdjust="spacingAndGlyphs">INSERT</text>
<text x="242.94" y="108.20" font-family="Liberation Sans" font-size="13" font-weight="400" fill="#444444" textLength="40.31" lengthAdjust="spacingAndGlyphs">DESIGN</text>
<text x="311.85" y="108.20" font-family="Liberation Sans" font-size="13" font-weight="400" fill="#c43e1c" textLength="74.31" lengthAdjust="spacingAndGlyphs">TRANSITIONS</text>
<text x="414.55" y="108.20" font-family="Liberation Sans" font-size="13" font-weight="400" fill="#444444" textLength="73.81" lengthAdjust="spacingAndGlyphs">ANIMATIONS</text>
<text x="516.54" y="108.20" font-family="Liberation Sans" font-size="13" font-weight="400" fill="#444444" textLength="67.31" lengthAdjust="spacingAndGlyphs">SLIDE SHOW</text>
<text x="613.14" y="108.20" font-family="Liberation Sans" font-size="13" font-weight="400" fill="#444444" textLength="39.81" lengthAdjust="spacingAndGlyphs">REVIEW</text>
<text x="681.54" y="108.20" font-family="Liberation Sans" font-size="13" font-weight="400" fill="#444444" textLength="27.31" lengthAdjust="spacingAndGlyphs">VIEW</text>
<text x="1365.75" y="104.70" font-family="Liberation Sans" font-size="13" font-weight="400" fill="#444444" textLength="36.91" lengthAdjust="spacingAndGlyphs">Sign in</text>
<text x="42.26" y="169.00" font-family="Liberation Sans" font-size="12.5" font-weight="400" fill="#444444" textLength="40.88" lengthAdjust="spacingAndGlyphs">Preview</text>
<text x="114.96" y="172.70" font-family="Liberation Sans" font-size="12.5" font-weight="400" fill="#444444" textLength="44.78" lengthAdjust="spacingAndGlyphs">Random</text>
<text x="210.16" y="172.70" font-family="Liberation Sans" font-size="12.5" font-weight="400" fill="#444444" textLength="19.58" lengthAdjust="spacingAndGlyphs">Pan</text>
<text x="270.06" y="172.70" font-family="Liberation Sans" font-size="12.5" font-weight="400" fill="#444444" textLength="64.07" lengthAdjust="spacingAndGlyphs">Ferris Wheel</text>
<text x="358.16" y="172.70" font-family="Liberation Sans" font-size="12.5" font-weight="400" fill="#444444" textLength="51.07" lengthAdjust="spacingAndGlyphs">Conveyor</text>
<text x="448.96" y="172.70" font-family="Liberation Sans" font-size="12.5" font-weight="400" fill="#444444" textLength="34.48" lengthAdjust="spacingAndGlyphs">Rotate</text>
<text x="525.56" y="172.70" font-family="Liberation Sans" font-size="12.5" font-weight="400" fill="#444444" textLength="44.88" lengthAdjust="spacingAndGlyphs">Window</text>
<text x="614.56" y="172.70" font-family="Liberation Sans" font-size="12.5" font-weight="400" fill="#444444" textLength="28.88" lengthAdjust="spacingAndGlyphs">Orbit</text>
<text x="679.56" y="172.70" font-family="Liberation Sans" font-size="12.5" font-weight="400" fill="#444444" textLength="64.88" lengthAdjust="spacingAndGlyphs">Fly Through</text>
<text x="947.36" y="168.20" font-family="Liberation Sans" font-size="12.5" font-weight="400" fill="#444444" textLength="31.38" lengthAdjust="spacingAndGlyphs">Effect</text>
<text x="937.56" y="184.50" font-family="Liberation Sans" font-size="12.5" font-weight="400" fill="#444444" textLength="43.88" lengthAdjust="spacingAndGlyphs">Options</text>
<text x="1021.26" y="135.20" font-family="Liberation Sans" font-size="12.5" font-weight="400" fill="#444444" textLength="38.08" lengthAdjust="spacingAndGlyphs">Sound:</text>
<text x="1067.16" y="135.20" font-family="Liberation Sans" font-size="12.5" font-weight="400" fill="#444444" textLength="60.58" lengthAdjust="spacingAndGlyphs">[No Sound]</text>
<text x="1021.26" y="157.80" font-family="Liberation Sans" font-size="12.5" font-weight="400" fill="#444444" textLength="49.17" lengthAdjust="spacingAndGlyphs">Duration:</text>
<text x="1096.56" y="157.80" font-family="Liberation Sans" font-size="12.5" font-weight="400" fill="#444444" textLength="27.88" lengthAdjust="spacingAndGlyphs">01.50</text>
<text x="1021.26" y="181.00" font-family="Liberation Sans" font-size="12.5" font-weight="400" fill="#444444" textLength="65.88" lengthAdjust="spacingAndGlyphs">Apply To All</text>
<text x="1167.86" y="135.20" font-family="Liberation Sans" font-size="12.5" font-weight="400" fill="#444444" textLength="74.47" lengthAdjust="spacingAndGlyphs">Advance Slide</text>
<text x="1188.56" y="157.80" font-family="Liberation Sans" font-size="12.5" font-weight="400" fill="#444444" textLength="84.88" lengthAdjust="spacingAndGlyphs">On Mouse Click</text>
<text x="1188.56" y="181.00" font-family="Liberation Sans" font-size="12.5" font-weight="400" fill="#444444" textLength="29.48" lengthAdjust="spacingAndGlyphs">After:</text>
<text x="1227.56" y="181.00" font-family="Liberation Sans" font-size="12.5" font-weight="400" fill="#444444" textLength="42.88" lengthAdjust="spacingAndGlyphs">00:00.00</text>
<text x="43.21" y="204.00" font-family="Liberation Sans" font-size="11.2" font-weight="400" fill="#666" textLength="38.98" lengthAdjust="spacingAndGlyphs">Preview</text>
<text x="485.01" y="204.10" font-family="Liberation Sans" font-size="11.2" font-weight="400" fill="#666" textLength="115.88" lengthAdjust="spacingAndGlyphs">Transition to This Slide</text>
<text x="1127.21" y="204.10" font-family="Liberation Sans" font-size="11.2" font-weight="400" fill="#666" textLength="35.18" lengthAdjust="spacingAndGlyphs">Timing</text>
</svg>
<svg class="a" style="left:0;top:0" width="1440" height="905"><polygon points="351.3,102.2 351.3,118.4 355.0,114.9 357.5,120.4 359.7,119.5 357.3,114.1 362.3,114.0" fill="#fff" stroke="#111" stroke-width="1" stroke-linejoin="miter"/></svg>
</div>
</body></html>
